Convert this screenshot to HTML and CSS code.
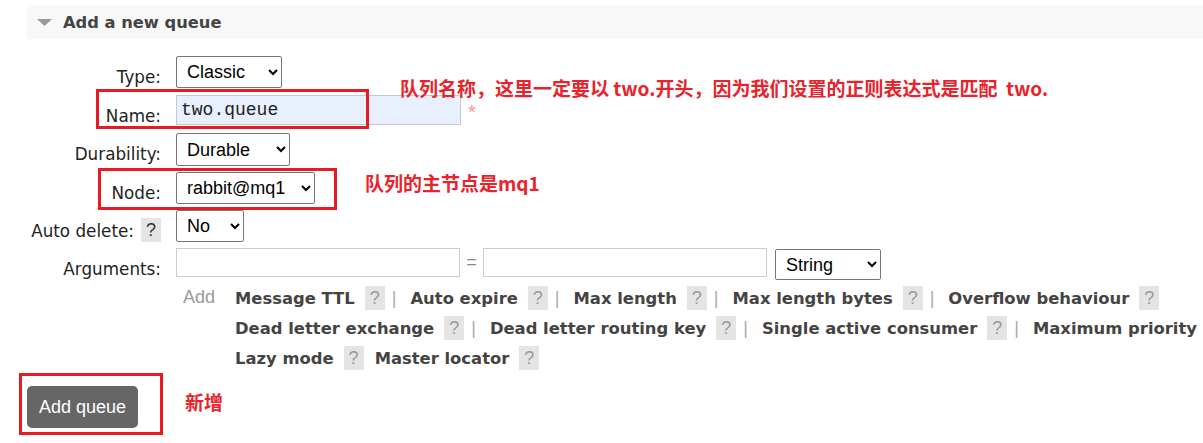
FILE: index.html
```html
<!DOCTYPE html>
<html lang="zh">
<head>
<meta charset="utf-8">
<title>Add a new queue</title>
<link rel="stylesheet" href="styles.css">
</head>
<body>
<div class="page">
  <div class="section-head">
    <svg class="tri" width="15" height="8" viewBox="0 0 15 8"><polygon points="0,0 15,0 7.5,7" fill="#999"/></svg>
    <h2 class="title">Add a new queue</h2>
  </div>

  <div class="form">
    <div class="lbl">Type:</div>
    <div class="ctl"><select class="sel sel-type"><option>Classic</option><option>Quorum</option></select></div>

    <div class="lbl">Name:</div>
    <div class="ctl"><input class="txt txt-name" type="text" value="two.queue"><span class="req">*</span></div>

    <div class="lbl">Durability:</div>
    <div class="ctl"><select class="sel sel-dur"><option>Durable</option><option>Transient</option></select></div>

    <div class="lbl">Node:</div>
    <div class="ctl"><select class="sel sel-node"><option>rabbit@mq1</option></select></div>

    <div class="lbl lbl-help"><span>Auto delete:</span><span class="help help-dark">?</span></div>
    <div class="ctl"><select class="sel sel-no"><option>No</option><option>Yes</option></select></div>

    <div class="lbl">Arguments:</div>
    <div class="ctl">
      <input class="txt txt-arg" type="text">
      <span class="eq">=</span>
      <input class="txt txt-arg" type="text">
      <select class="sel sel-str"><option>String</option><option>Number</option><option>Boolean</option><option>List</option></select>
    </div>

    <div class="spacer"></div>
    <div class="args-links">
      <span class="add">Add</span>
      <div class="link-rows">
        <div class="link-row">
          <span class="argl">Message TTL</span><span class="help">?</span><span class="sep">|</span>
          <span class="argl">Auto expire</span><span class="help">?</span><span class="sep">|</span>
          <span class="argl">Max length</span><span class="help">?</span><span class="sep">|</span>
          <span class="argl">Max length bytes</span><span class="help">?</span><span class="sep">|</span>
          <span class="argl">Overflow behaviour</span><span class="help">?</span>
        </div>
        <div class="link-row">
          <span class="argl">Dead letter exchange</span><span class="help">?</span><span class="sep">|</span>
          <span class="argl">Dead letter routing key</span><span class="help">?</span><span class="sep">|</span>
          <span class="argl">Single active consumer</span><span class="help">?</span><span class="sep">|</span>
          <span class="argl">Maximum priority</span>
        </div>
        <div class="link-row">
          <span class="argl">Lazy mode</span><span class="help">?</span>
          <span class="argl argl-gap">Master locator</span><span class="help">?</span>
        </div>
      </div>
    </div>
  </div>

  <button class="btn" type="button">Add queue</button>

  <div class="mark mark-name"></div>
  <div class="mark mark-node"></div>
  <div class="mark mark-btn"></div>
  <div class="note note-name">队列名称，这里一定要以 two.开头，因为我们设置的正则表达式是匹配  two.</div>
  <div class="note note-node">队列的主节点是mq1</div>
  <div class="note note-add">新增</div>
</div>
</body>
</html>
```

FILE: styles.css
```css
html, body {
  margin: 0;
  padding: 0;
  overflow: hidden;
  background: #fff;
}

body {
  font-family: "DejaVu Sans", Verdana, sans-serif;
  font-size: 16px;
  color: #222;
}

.page {
  position: relative;
  padding: 5px 0 0 27px;
  height: 438px;
}

.section-head {
  display: flex;
  align-items: center;
  height: 34px;
  background: #f8f8f8;
  padding-left: 10px;
}

.tri {
  display: block;
  margin-top: 2px;
}

.title {
  margin: 0 0 0 11px;
  font-size: 16.3px;
  font-weight: bold;
  color: #444;
  line-height: 20px;
  padding-top: 2px;
}

.form {
  display: grid;
  grid-template-columns: 134px 1fr;
  grid-template-rows: 39px 38px 39px 38px 38px 38px auto;
  column-gap: 15px;
  margin-top: 17px;
}

.lbl {
  display: flex;
  justify-content: flex-end;
  align-items: flex-start;
  gap: 7px;
  padding-top: 11px;
  line-height: 20px;
  font-size: 16.8px;
  color: #222;
  white-space: nowrap;
}

.lbl-help {
  padding-top: 8px;
}

.lbl-help > span:first-child {
  padding-top: 3px;
}

.ctl {
  display: flex;
  align-items: flex-start;
}

.sel {
  box-sizing: border-box;
  height: 32px;
  font-family: "Liberation Sans", Arial, sans-serif;
  font-size: 18px;
  color: #000;
  background: #fff;
  border: 1px solid #767676;
  border-radius: 2px;
  padding: 0 0 0 6px;
  margin: 0;
}

.sel-type { width: 106px; }
.sel-dur { width: 114px; height: 33px; }
.sel-node { width: 139px; }
.sel-no { width: 68px; }
.sel-str { width: 106px; height: 31px; margin-left: 8px; margin-top: 1px; }

.txt {
  box-sizing: border-box;
  margin: 0;
  border: 1px solid #ccc;
  background: #fff;
  padding: 0 4px;
  font-family: "Liberation Mono", "Courier New", monospace;
  font-size: 18px;
  color: #222;
}

.txt-name {
  width: 285px;
  height: 30px;
  background: #e8f0fe;
  border-color: #c8c8c8;
}

.txt-arg {
  width: 284px;
  height: 29px;
}

.req {
  margin-left: 7px;
  margin-top: 7px;
  color: #f39a9a;
  font-family: "Liberation Sans", Arial, sans-serif;
  font-size: 20px;
  line-height: 20px;
}

.eq {
  width: 23px;
  text-align: center;
  line-height: 29px;
  font-family: "Liberation Sans", Arial, sans-serif;
  font-size: 18px;
  color: #888;
}

.help {
  display: inline-block;
  width: 20px;
  height: 24px;
  line-height: 24px;
  text-align: center;
  background: #e4e4e4;
  color: #999;
  font-family: "Liberation Sans", Arial, sans-serif;
  font-size: 18px;
  margin-left: 10px;
  flex: none;
}

.help-dark {
  color: #333;
  margin-left: 0;
}

.args-links {
  display: flex;
  align-items: flex-start;
}

.add {
  width: 52px;
  padding-left: 7px;
  flex: none;
  color: #999;
  font-family: "Liberation Sans", Arial, sans-serif;
  font-size: 18px;
  line-height: 22px;
}

.link-rows {
  display: flex;
  flex-direction: column;
  gap: 6px;
}

.link-row {
  display: flex;
  align-items: center;
  height: 24px;
  white-space: nowrap;
}

.argl {
  font-weight: bold;
  font-size: 16.4px;
  color: #444;
  flex: none;
}

.argl-gap {
  margin-left: 11px;
}

.sep {
  flex: none;
  margin: 0 14px 0 7px;
  color: #aaa;
  font-family: "Liberation Sans", Arial, sans-serif;
  font-size: 18px;
}

.btn {
  display: block;
  margin-top: 16px;
  width: 111px;
  height: 42px;
  padding: 0;
  border: none;
  border-radius: 5px;
  background: #666;
  color: #fff;
  font-family: "Liberation Sans", Arial, sans-serif;
  font-size: 18px;
}

.mark {
  position: absolute;
  box-sizing: border-box;
  border: 3px solid #e81b25;
}

.mark-name { left: 96px; top: 89px; width: 273px; height: 40px; }
.mark-node { left: 98px; top: 168px; width: 239px; height: 42px; }
.mark-btn { left: 19px; top: 373px; width: 144px; height: 62px; }

.note {
  position: absolute;
  color: #e8232b;
  font-family: "Noto Sans CJK SC", "Noto Sans", sans-serif;
  font-weight: bold;
  font-size: 19px;
  line-height: 24px;
  white-space: pre;
}

.note-name { left: 400px; top: 76px; }
.note-node { left: 365px; top: 171px; }
.note-add { left: 185px; top: 390px; }
```
